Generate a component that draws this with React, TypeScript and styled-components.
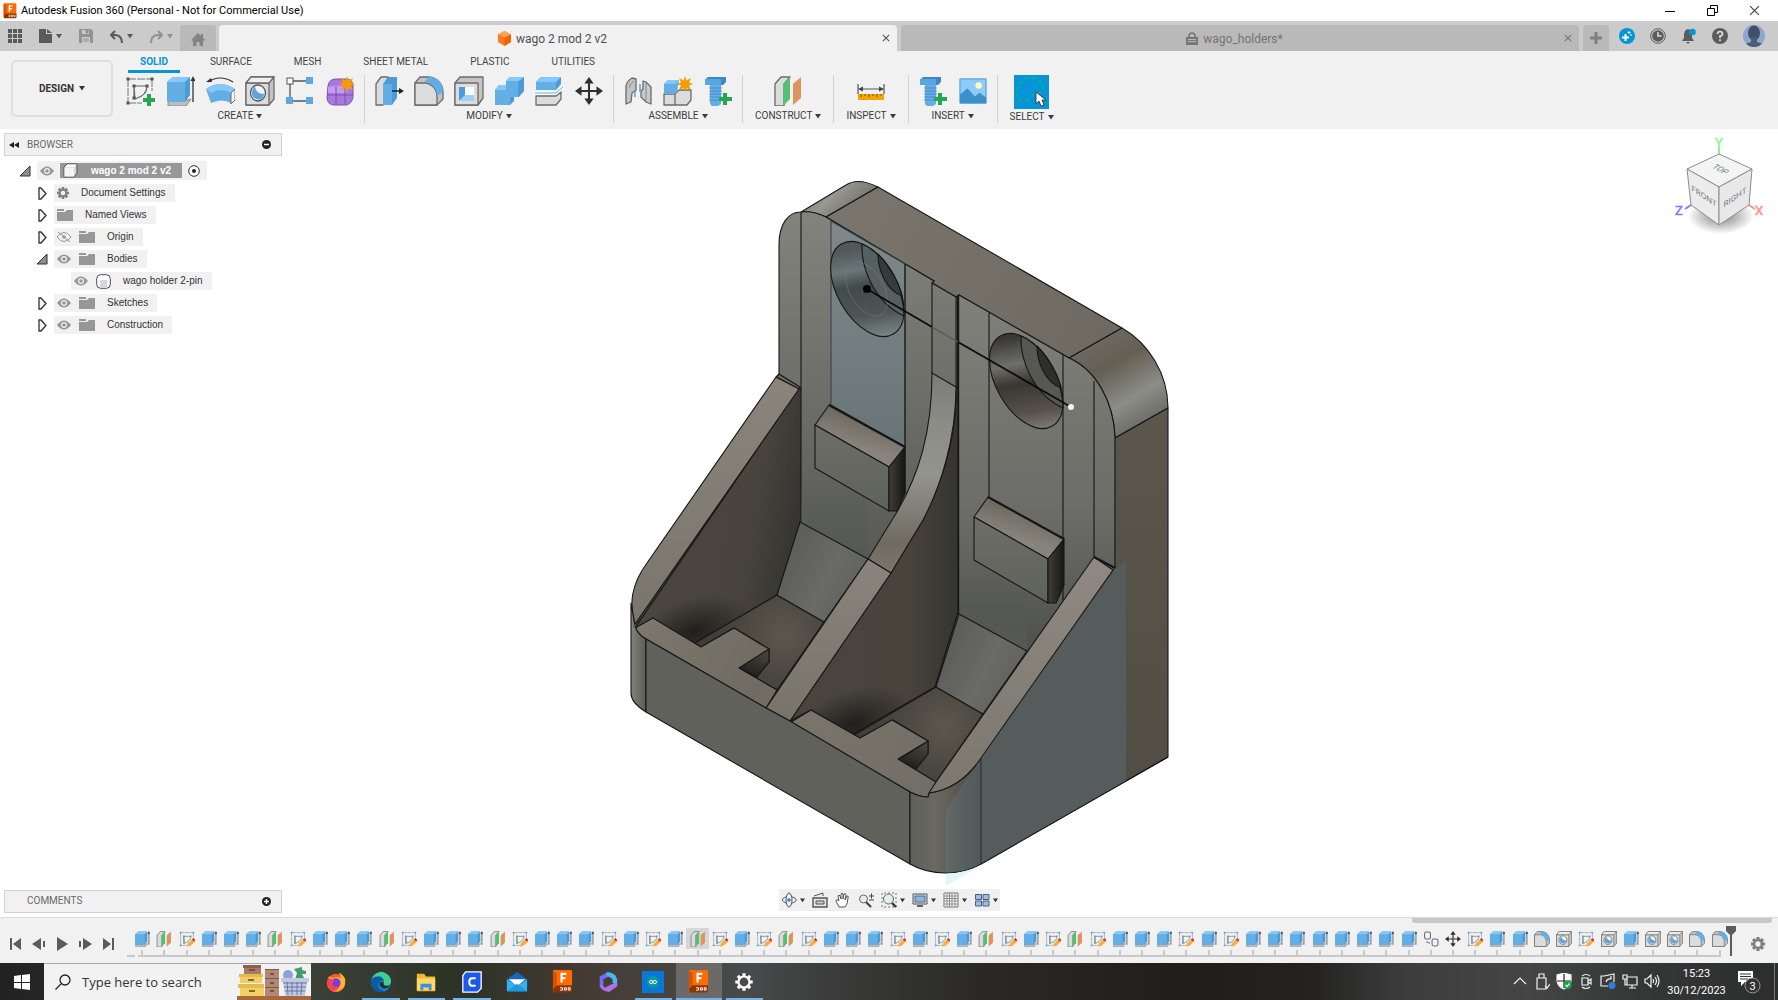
import React from "react";
import styled, { createGlobalStyle } from "styled-components";

const UI = `Roboto, "Liberation Sans", sans-serif`;
const ARIAL = `"Liberation Sans", Arial, sans-serif`;
const SEGOE = `"Open Sans", "Noto Sans", sans-serif`;

const Global = createGlobalStyle`
  * { box-sizing: border-box; }
  html, body, #root { height: 100%; }
  body { margin: 0; overflow: hidden; font-family: ${UI}; color: #3c3c3c; background: #fff; }
  button { appearance: none; border: 0; margin: 0; padding: 0; background: none; color: inherit; font: inherit; }
  svg { display: block; flex: none; }
`;

const Shell = styled.div`
  height: 100vh;
  display: flex;
  flex-direction: column;
`;

/* ---------- window title ---------- */
const TitleBar = styled.header`
  height: 21px;
  flex: none;
  display: flex;
  align-items: center;
  background: #fff;
  padding: 0 3px 0 3px;
`;
const WindowTitle = styled.h1`
  flex: 1;
  margin: 0 0 0 4px;
  font: 400 11px/16px ${UI};
  color: #000;
`;
const WindowButton = styled.button`
  width: 42px;
  height: 20px;
  display: grid;
  place-items: center;
`;

/* ---------- document tabs ---------- */
const TabBar = styled.div`
  height: 30px;
  flex: none;
  display: flex;
  align-items: stretch;
  background: #cbcbcb;
  padding-top: 4px;
`;
const QuickAccess = styled.div`
  width: 180px;
  flex: none;
  display: flex;
  align-items: center;
  gap: 17px;
  padding: 0 0 4px 8px;
`;
const QuickButton = styled.button<{ $dim?: boolean }>`
  display: flex;
  align-items: center;
  gap: 4px;
  color: ${(p) => (p.$dim ? "#929292" : "#5a5a5a")};
`;
const HomeTab = styled.button`
  width: 36px;
  margin-right: 3px;
  padding-top: 2px;
  border-radius: 3px 3px 0 0;
  background: #b9b9b9;
  color: #838383;
  display: grid;
  place-items: center;
`;
const DocTabs = styled.div`
  flex: 1;
  display: flex;
  gap: 4px;
`;
const DocTab = styled.div<{ $active?: boolean }>`
  flex: 1;
  display: flex;
  align-items: center;
  border-radius: 4px 4px 0 0;
  background: ${(p) => (p.$active ? "#f1f1f1" : "#b9b9b9")};
  color: ${(p) => (p.$active ? "#505050" : "#747474")};
`;
const DocTitle = styled.button`
  flex: 1;
  display: flex;
  align-items: center;
  justify-content: center;
  gap: 5px;
  height: 100%;
  padding: 1px 0 0 6px;
  font: 400 12px/16px ${UI};
`;
const DocClose = styled.button`
  width: 12px;
  height: 16px;
  margin-right: 5px;
  display: grid;
  place-items: center;
`;
const NewTab = styled.button`
  width: 26px;
  margin-left: 4px;
  border-radius: 4px 4px 0 0;
  background: #b9b9b9;
  color: #808080;
  display: grid;
  place-items: center;
`;
const Account = styled.div`
  display: flex;
  align-items: center;
  gap: 15px;
  padding: 0 13px 4px 10px;
  color: #5c5c5c;
`;

/* ---------- ribbon ---------- */
const Ribbon = styled.div`
  height: 78px;
  flex: none;
  display: flex;
  background: #f1f1f1;
`;
const Workspace = styled.button`
  width: 102px;
  height: 57px;
  margin: 9px 7px 0 11px;
  border: 2px solid #dedede;
  border-radius: 5px;
  display: flex;
  align-items: center;
  justify-content: center;
  gap: 5px;
  font: 700 10px/12px ${UI};
  color: #333;
`;
const RibbonBody = styled.div`
  flex: 1;
  display: flex;
  flex-direction: column;
`;
const RibbonTabs = styled.nav`
  display: flex;
  gap: 18px;
  padding: 4px 0 0 8px;
`;
const RibbonTab = styled.button<{ $on?: boolean }>`
  padding: 0 12px 2px;
  border-bottom: 3px solid ${(p) => (p.$on ? "#0696d7" : "transparent")};
  font: ${(p) => (p.$on ? 700 : 400)} 10px/13px ${UI};
  color: ${(p) => (p.$on ? "#0696d7" : "#444")};
`;
const Groups = styled.div`
  display: flex;
  margin-top: 2px;
`;
const Group = styled.section`
  display: flex;
  flex-direction: column;
  align-items: center;
  padding: 0 4px;
  height: 48px;
  border-right: 1px solid #d2d2d2;
  &:first-child { padding-left: 0; }
  &:last-child { border-right: 0; }
`;
const ToolRow = styled.div`
  display: flex;
  height: 34px;
  margin-bottom: 1px;
`;
const Tool = styled.button`
  width: 40px;
  height: 32px;
  display: grid;
  place-items: center;
`;
const SelectTool = styled.button`
  width: 35px;
  height: 34px;
  background: #0696d7;
  display: grid;
  place-items: center;
`;
const GroupLabel = styled.button`
  display: flex;
  align-items: center;
  gap: 3px;
  padding: 0 8px;
  font: 400 10px/14px ${UI};
  color: #3c3c3c;
`;

/* ---------- canvas ---------- */
const Viewport = styled.main`
  position: relative;
  flex: 1;
  min-height: 0;
  background: #fff;
  display: flex;
  flex-direction: column;
  justify-content: space-between;
  padding: 4px 4px 4px 4px;
`;
const Scene = styled.svg`
  position: absolute;
  inset: 0;
  width: 100%;
  height: 100%;
`;
const CubeSpot = styled.div`
  position: absolute;
  top: 5px;
  right: 10px;
`;
const Panel = styled.aside`
  position: relative;
  width: 278px;
`;
const PanelHead = styled.div`
  height: 23px;
  display: flex;
  align-items: center;
  padding: 0 10px 0 4px;
  border: 1px solid #d2d2d2;
  background: #f1f1f1;
`;
const PanelIcon = styled.button`
  width: 18px;
  display: flex;
`;
const PanelTitle = styled.h2`
  flex: 1;
  margin: 0;
  font: 400 10px/14px ${UI};
  color: #6a6a6a;
`;
const Tree = styled.ul`
  list-style: none;
  margin: 5px 0 0;
  padding: 0;
  display: flex;
  flex-direction: column;
  gap: 4px;
`;
const TreeRow = styled.li<{ $depth: number }>`
  height: ${(p) => (p.$depth ? 18 : 19)}px;
  display: flex;
  align-items: center;
  padding-left: ${(p) => 15 + p.$depth * 17}px;
`;
const Twisty = styled.button`
  width: 18px;
  height: 18px;
  display: flex;
  align-items: center;
`;
const Chip = styled.div<{ $root?: boolean }>`
  height: ${(p) => (p.$root ? 19 : 18)}px;
  display: flex;
  align-items: center;
  gap: ${(p) => (p.$root ? 6 : 8)}px;
  padding: 0 ${(p) => (p.$root ? 7 : 9)}px 0 3px;
  background: #f1f1f1;
  font: 400 10px/18px ${ARIAL};
  color: #333;
`;
const RootName = styled.span`
  height: 15px;
  display: flex;
  align-items: center;
  gap: 13px;
  padding: 0 11px 0 3px;
  background: #989898;
  color: #fff;
  font: 700 10px/15px ${ARIAL};
`;
const NodeName = styled.span`
  padding-left: 4px;
`;
const BottomRow = styled.div`
  position: relative;
  display: grid;
  grid-template-columns: 1fr auto 1fr;
  align-items: center;
`;
const NavBar = styled.div`
  height: 22px;
  margin-bottom: 2px;
  display: flex;
  align-items: center;
  gap: 7px;
  padding: 0 2px;
  background: #f0f0f0;
`;
const NavButton = styled.button`
  display: flex;
  align-items: center;
  gap: 3px;
`;

/* ---------- timeline ---------- */
const Timeline = styled.footer`
  position: relative;
  height: 46px;
  flex: none;
  display: flex;
  background: #f1f1f1;
  border-top: 1px solid #dadada;
`;
const ScrollThumb = styled.div`
  position: absolute;
  top: 0;
  right: 6px;
  width: 360px;
  height: 5px;
  border-radius: 0 0 3px 3px;
  background: #c8c8c8;
`;
const Playback = styled.div`
  display: flex;
  align-items: center;
  padding: 6px 8px 0 4px;
  color: #5c5c5c;
`;
const PlayButton = styled.button`
  width: 23px;
  display: grid;
  place-items: center;
`;
const Track = styled.div`
  position: relative;
  flex: 1;
  padding-top: 10px;
`;
const Features = styled.div`
  display: flex;
  padding-left: 4px;
`;
const Feature = styled.button<{ $sel?: boolean }>`
  flex: 1;
  min-width: 0;
  height: 27px;
  display: flex;
  flex-direction: column;
  align-items: center;
  gap: 1px;
  &::after { content: ""; width: 2px; height: 5px; background: #c9c9c9; }
  & > span { width: 100%; height: 21px; display: grid; place-items: center; background: ${(p) =>
    p.$sel ? "#d6d6d6" : "none"}; }
`;
const Rail = styled.div`
  display: flex;
  gap: 3px;
  margin-right: 10px;
`;
const RailDash = styled.i`
  width: 8px;
  border-top: 2px dashed #c9c9c9;
`;
const RailLine = styled.i`
  flex: 1;
  height: 2px;
  background: #c9c9c9;
`;
const Marker = styled.div`
  position: absolute;
  right: -5px;
  top: 8px;
`;
const TimelineSettings = styled.button`
  width: 47px;
  padding: 6px 0 0 7px;
  display: grid;
  place-items: center;
`;

/* ---------- taskbar ---------- */
const Taskbar = styled.div`
  height: 37px;
  flex: none;
  display: flex;
  align-items: stretch;
  color: #fff;
  background: linear-gradient(90deg, #222 0, #3c4138 17.5%, #2d3226 26%, #453b34 33%, #484b4c 42%, #3a3b3a 47%, #2a2926 55%, #1f1e1d 67%, #242322 74%, #3d3d3d 79%, #454545 86%, #363838 92%, #2c2d2d 100%);
`;
const Start = styled.button`
  width: 44px;
  display: grid;
  place-items: center;
`;
const Search = styled.label`
  width: 267px;
  display: flex;
  align-items: center;
  border-top: 1px solid #a8a8a8;
  background: #f2f2f2;
  padding-left: 11px;
  gap: 11px;
`;
const SearchInput = styled.input`
  flex: 1;
  min-width: 0;
  border: 0;
  padding: 0;
  background: none;
  font: 400 13px/20px ${SEGOE};
  color: #333;
  outline: 0;
  &::placeholder { color: #333; opacity: 1; }
`;
const Apps = styled.div`
  width: 454px;
  margin-left: 2px;
  display: grid;
  grid-template-columns: repeat(10, 1fr);
`;
const AppButton = styled.button<{ $run?: boolean; $active?: boolean }>`
  position: relative;
  display: grid;
  place-items: center;
  background: ${(p) => (p.$active ? "#6b6a69" : "none")};
  &::after {
    content: "";
    position: absolute;
    bottom: 0;
    left: ${(p) => (p.$active ? 0 : 4)}px;
    right: ${(p) => (p.$active ? 0 : 4)}px;
    height: 2px;
    background: ${(p) => (p.$run || p.$active ? "#76b2e4" : "none")};
  }
`;
const Tray = styled.div`
  margin-left: auto;
  display: flex;
  align-items: center;
`;
const TrayButton = styled.button`
  width: 22px;
  display: grid;
  place-items: center;
`;
const Clock = styled.time`
  width: 67px;
  text-align: center;
  font: 400 11px/17px ${UI};
`;
const Notices = styled.button`
  width: 37px;
  display: grid;
  place-items: center;
`;
const DesktopEdge = styled.i`
  width: 4px;
  margin-left: 7px;
  align-self: stretch;
  border-left: 1px solid #777;
`;

/* ================= icons ================= */
const Caret = ({ s = 6, c = "currentColor" }: { s?: number; c?: string }) => (
  <svg width={s} height="5" viewBox="0 0 6 5"><path d="M0 0h6L3 4.6z" fill={c} /></svg>
);

const FusionLogo = ({ w, h }: { w: number; h: number }) => (
  <svg width={w} height={h} viewBox="0 0 22 24">
    <rect x="1" width="20" height="23" rx="1.5" fill="#ff6b00" />
    <path d="M1 1l4 2v14l-4 3z" fill="#d95200" />
    <path d="M1 20l4-4h16v6l-1 1.500H2z" fill="#8a3500" />
    <path d="M10 13V4h5M10 8.500h4" stroke="#fff" strokeWidth="2.200" fill="none" />
    <path d="M8.500 18.500h2.500v2.500H8.500M13 18.500h2v2.500h-2zM17 18.500h2v2.500h-2z" stroke="#fff" fill="none" strokeWidth="1" />
  </svg>
);

const Grey = ({ children }: { children: React.ReactNode }) => (
  <g fill="#dcdcdc" stroke="#6b6b6b" strokeWidth="1.300" strokeLinejoin="round">{children}</g>
);
type IconProps = { w?: number; h?: number };
const Svg = ({ w = 30, h = 30, children }: IconProps & { children: React.ReactNode }) => (
  <svg width={w} height={h} viewBox="0 0 30 30">{children}</svg>
);

const SketchLines = ({ dot }: { dot: string }) => (
  <>
    <path d="M3 3h24M3 3v24M27 3v12M3 27h14" stroke="#777" strokeWidth="1" strokeDasharray="8 1" fill="none" />
    <path d="M9 10h13c0 7-5 11-12 13zM9 10v13" stroke="#666" strokeWidth="1.200" fill="none" />
    {[[3, 3], [27, 3], [3, 27], [9, 10], [22, 10], [9, 22]].map(([x, y]) => (
      <rect key={`${x}-${y}`} x={x - 1.5} y={y - 1.5} width="3" height="3" fill={dot} />
    ))}
  </>
);
const Sketch = (p: IconProps) => (
  <Svg {...p}><SketchLines dot="#555" /><path d="M22 18h4v4h4v4h-4v4h-4v-4h-4v-4h4z" fill="#26a651" /></Svg>
);
const SketchEdit = (p: IconProps) => (
  <Svg {...p}>
    <SketchLines dot="#4fa8e6" />
    <path d="M15 29l2-6 8-8 5 5-9 8z" fill="#f3b13a" /><path d="M24 16l3-3 4 4-3 3z" fill="#e8323c" />
  </Svg>
);
const Extrude = (p: IconProps) => (
  <Svg {...p}>
    <path d="M3 27l2-3h18l3-1-5 7H3z" fill="#bdbdbd" stroke="#8b8b8b" />
    <path d="M2 6l6-5h17v18l-5 7H2z" fill="#4c9bd9" />
    <path d="M2 6h18v20H2z" fill="#64aee6" /><path d="M2 6l6-5h17l-5 5z" fill="#86c8fb" />
    <path d="M28 26V4" stroke="#333" strokeWidth="1.300" /><path d="M25.500 5L28 0l2.500 5z" fill="#333" />
  </Svg>
);
const Revolve = () => (
  <Svg>
    <path d="M1 13q14-10 29 0l-4 14q-9-5-20 0z" fill="#64aee6" />
    <path d="M1 13q14-10 29 0l-4 4q-10-6-20 0z" fill="#86c8fb" />
    <path d="M30 13l-4 4v11l4-4z" fill="#fff" stroke="#666" />
    <path d="M3 6q12-8 25 0" fill="none" stroke="#333" strokeWidth="1.200" /><path d="M1 6l5-4 1 4z" fill="#333" />
  </Svg>
);
const Hole = (p: IconProps) => (
  <Svg {...p}>
    <Grey><path d="M1 7l5-6h23v22l-5 6H1z" fill="#c4c4c4" /><path d="M1 7h23v22H1z" /><path d="M1 7l5-6h23l-5 6z" fill="#eee" /></Grey>
    <ellipse cx="13" cy="17" rx="7.500" ry="8" fill="#f4f4f4" stroke="#555" strokeWidth="1.300" />
    <path d="M10 10.500c-5 5-4 12 3 13 4 0 6-2 6-6-5 1-8-2-9-7z" fill="#5ba6e0" />
  </Svg>
);
const Pattern = () => (
  <Svg>
    <path d="M6 5h18M5 6v18M6 25h18" stroke="#555" strokeWidth="1.300" />
    <rect x="2" y="2" width="6" height="6" fill="#fff" stroke="#555" />
    <path d="M21 1h7v7h-7zM1 21h7v7H1zM21 21h7v7h-7z" fill="#5aa9e6" />
  </Svg>
);
const Star = ({ x, y }: { x: number; y: number }) => (
  <path transform={`translate(${x} ${y})`} d="M0-8l1.500 4.500L6-6 4-1.500 8 0 4 1.500 6 6 1.500 4 0 8l-1.500-4L-6 6l2-4.500L-8 0l4-1.500L-6-6l4.500 2.500z" fill="#f59b00" />
);
const Form = () => (
  <Svg>
    <path d="M3 10q1-7 8-7h11q6 1 6 7v10q0 6-6 9H9q-6 0-7-7z" fill="#a879dd" stroke="#7e4fb8" />
    <path d="M3 11q8-3 22 0l-4 6H3z" fill="#c39bf0" /><path d="M11 10v19M20 11v17M3 19h25" stroke="#7e4fb8" fill="none" />
    <Star x={22} y={8} />
  </Svg>
);
const PressPull = () => (
  <Svg>
    <Grey><path d="M2 8l5-7h7v22l-5 6H2z" /></Grey>
    <path d="M9 8l5-7h9v21l-5 7H9z" fill="#4c9bd9" /><path d="M9 8h9v21H9z" fill="#64aee6" />
    <path d="M18 15h9" stroke="#222" strokeWidth="1.500" /><path d="M25 12l5 3-5 3z" fill="#222" />
  </Svg>
);
const Fillet = (p: IconProps) => (
  <Svg {...p}>
    <Grey><path d="M1 7l5-6h9c9 1 14 8 14 15v7l-6 6H1z" fill="#c2c2c2" /><path d="M1 7h9c8 0 13 6 13 14v8H1z" /></Grey>
    <path d="M10 6l5-5c9 0 14 7 14 15l-6 4C23 12 18 7 10 6z" fill="#64aee6" />
  </Svg>
);
const ShellIcon = () => (
  <Svg>
    <Grey><path d="M1 7l5-6h23v21l-5 7H1z" fill="#c4c4c4" /><path d="M1 7h23v22H1z" /></Grey>
    <path d="M5 11h15v14H5z" fill="#fff" /><path d="M5 11h6v9l-6 5z" fill="#4c9bd9" /><path d="M5 25l6-6h9v6z" fill="#9ad1fa" />
  </Svg>
);
const Combine = () => (
  <Svg>
    <path d="M1 14l4-5h7V5l4-4h14v14l-5 6h-5v4l-4 4H1z" fill="#4c9bd9" />
    <path d="M1 14h11V5h12v16H16v8H1z" fill="#64aee6" /><path d="M12 5l4-4h14l-5 4zM1 14l4-5h7v5z" fill="#86c8fb" />
  </Svg>
);
const Offset = () => (
  <Svg>
    <path d="M2 6l5-5h20v7l-5 6H2z" fill="#4c9bd9" /><path d="M2 6h20v8H2z" fill="#64aee6" /><path d="M2 6l5-5h20l-5 5z" fill="#86c8fb" />
    <Grey><path d="M2 20h20l5-4v7l-5 6H2z" /></Grey>
    <path d="M0 17h22l7-6" stroke="#fff" strokeWidth="3" fill="none" /><path d="M1 17h21l7-6" stroke="#64aee6" fill="none" />
  </Svg>
);
const Move = (p: IconProps) => (
  <Svg {...p}>
    <path d="M15 4v22M4 15h22" stroke="#2f2f2f" strokeWidth="2.200" />
    <path d="M15 0l5 7H10zM15 30l5-7H10zM0 15l7-5v10zM30 15l-7-5v10z" fill="#2f2f2f" />
  </Svg>
);
const Joint = () => (
  <Svg>
    <Grey><path d="M3 10q1-5 6-8l4 1v11l-4 3-1 9-5 2z" fill="#c4c4c4" /><path d="M20 13V5l3 1 5 5v17l-5-2-5-5v-6z" fill="#c9c9c9" /></Grey>
    <path d="M6 12q1-5 5-7M23 7v18" stroke="#8a8a8a" fill="none" />
    <path d="M12 15v6M17 8v8" stroke="#5aa9e6" strokeWidth="1.600" />
  </Svg>
);
const NewComponent = () => (
  <Svg>
    <Grey><path d="M1 18h11v11H1zM12 18l4-4h12v10l-4 5H12z" /></Grey>
    <path d="M1 8l4-4h11l-2 12-2 2H1z" fill="#64aee6" /><path d="M1 8l4-4h11l-4 4z" fill="#86c8fb" />
    <Star x={22} y={8} />
  </Svg>
);
const Bolt = () => (
  <Svg>
    <path d="M2 4l3-3h18v5l-3 3H2z" fill="#3f86c4" /><path d="M2 3h16v6H2z" fill="#5aa6e2" />
    <path d="M7 9h11v19l-3 2H9l-2-2z" fill="#64aee6" />
    <path d="M6 12h13M6 15h13M6 18h13M6 21h13M6 24h13" stroke="#3f86c4" strokeWidth=".8" />
    <path d="M20 17h4v4h5v4h-5v4h-4v-4h-4v-4h4z" fill="#26a651" />
  </Svg>
);
const Plane = (p: IconProps) => (
  <Svg {...p}>
    <Grey><path d="M2 8l6-7h9l-6 7v22H2z" /></Grey>
    <path d="M10 8l7-7v22l-7 7z" fill="#54bf75" /><path d="M20 8l8-7v21l-8 7z" fill="#e0935f" />
  </Svg>
);
const Measure = () => (
  <Svg>
    <path d="M2 8v10M28 8v10M3 13h24" stroke="#555" strokeWidth="1.200" /><path d="M2 13l5-2.500v5zM28 13l-5-2.500v5z" fill="#444" />
    <path d="M2 18h26v6H2z" fill="#f5a300" /><path d="M5 18v3M9 18v2M13 18v3M17 18v2M21 18v3M25 18v2" stroke="#7a4f00" />
  </Svg>
);
const Picture = () => (
  <Svg w={28} h={28}>
    <path d="M1 2h28v26H1z" fill="#8ccbfa" stroke="#3f94d0" /><path d="M1 19l8-7 8 9 5-4 7 5v6H1z" fill="#3a90c9" />
    <circle cx="21" cy="9" r="3.500" fill="#fdf8c4" />
  </Svg>
);
const JointSmall = (p: IconProps) => (
  <Svg {...p}>
    <Grey><rect x="3" y="2" width="11" height="13" rx="3" fill="#f4f4f4" strokeWidth="2" /><rect x="17" y="15" width="11" height="13" rx="3" fill="#f4f4f4" strokeWidth="2" /></Grey>
    <path d="M6 20l7 3" stroke="#4f7fd6" strokeWidth="2" />
  </Svg>
);
const Lasso = () => (
  <svg width="35" height="34" viewBox="0 0 35 34">
    <path d="M4 22c-3-6 1-18 10-19 9-1 15 4 15 9s-6 7-10 8-5 6-9 6-5-2-6-4z" fill="none" stroke="#1fb27c" strokeWidth="1.200" strokeDasharray="4 3" />
    <path d="M22 17v12l3-3 2 5 3-1-2-5h4z" fill="#fff" stroke="#333" strokeWidth=".9" />
  </svg>
);

const GearShape = ({ s, c, hole = "#f1f1f1" }: { s: number; c: string; hole?: string }) => (
  <svg width={s} height={s} viewBox="-10 -10 20 20">
    {[0, 45, 90, 135].map((a) => <rect key={a} x="-2.200" y="-10" width="4.400" height="20" fill={c} transform={`rotate(${a})`} />)}
    <circle r="7.300" fill={c} /><circle r="3.800" fill={hole} />
  </svg>
);
const Eye = ({ off }: { off?: boolean }) => (
  <svg width="14" height="10" viewBox="0 0 14 10">
    <path d="M0 5q7-9 14 0-7 9-14 0z" fill={off ? "#f1f1f1" : "#979797"} stroke="#979797" strokeWidth={off ? 1 : 0} />
    <circle cx="7" cy="5" r="3" fill="#f1f1f1" /><circle cx="7" cy="5" r="1.800" fill="#979797" />
    {off && <path d="M1 0l12 10" stroke="#979797" />}
  </svg>
);
const Folder = () => (
  <svg width="16" height="12" viewBox="0 0 16 12"><path d="M0 0h7v2H0zM0 3h8l2-2h6v11H0z" fill="#979797" /></svg>
);
const Closed = () => (
  <svg width="11" height="13" viewBox="-2 0 11 13"><path d="M1 1v11h2l5-5.500L3 1z" fill="#f4f4f4" stroke="#333" strokeWidth="1.300" /></svg>
);
const Opened = () => (
  <svg width="12" height="12" viewBox="0 0 12 12"><path d="M11 1v10H1z" fill="#8e8e8e" stroke="#333" /></svg>
);
const Cube = () => (
  <svg width="15" height="15" viewBox="0 0 15 15"><path d="M1 4l3-3h10v9l-3 4H1z" fill="#d6d6d6" stroke="#555" /><path d="M1.500 4.500H11v9H1.500z" fill="#f5f5f5" /><path d="M2 4l2.500-2.500h9L11 4z" fill="#fff" /></svg>
);
const BodyIcon = () => (
  <svg width="15" height="15" viewBox="0 0 15 15"><rect x=".7" y=".7" width="13.600" height="13.600" rx="4" fill="#fff" stroke="#4b4b60" /><path d="M4 6h7v8H4z" fill="#d3d8e0" /></svg>
);
const OrangeCube = () => (
  <svg width="13" height="15" viewBox="0 0 13 15"><path d="M0 3.500L6.500 0 13 3.500v7.500L6.500 15 0 11z" fill="#ff7a1a" /><path d="M0 3.500L6.500 6.500 13 3.500 6.500 0z" fill="#ffa25c" /><path d="M6.500 6.500L13 3.500v7.500L6.500 15z" fill="#ec6500" /></svg>
);
const Cross = ({ s = 8, w = 1.3 }: { s?: number; w?: number }) => (
  <svg width={s} height={s} viewBox="0 0 10 10"><path d="M1 1l8 8M9 1L1 9" stroke="currentColor" strokeWidth={w} /></svg>
);

/* ================= model ================= */
const POCKET_ART = {
  blue: { bowl: "holeBlue", ring: "#566063", bore: "#363c3c" },
  brown: { bowl: "holeBrown", ring: "#585853", bore: "#2f2e2a" },
};
const Pocket = ({ tone }: { tone: keyof typeof POCKET_ART }) => {
  const art = POCKET_ART[tone];
  return (
    <g>
      <path d="M801 440H868V559L801 522z" fill="url(#lowwall)" stroke="none" />
      <path d="M777 595L824 622 777 690 739 668 769 662 769 649 734 628 701 647 695 643z" fill="url(#floor)" />
      <path d="M769 649V662L757 677 739 668z" fill="url(#notch)" />
      <path d="M800 522L868 559 824 622 777 595z" fill="url(#slope)" />
      <g transform="matrix(36.700 21.200 0 42.500 867.300 289)">
        <circle r="1" fill={`url(#${art.bowl})`} vectorEffect="non-scaling-stroke" />
      </g>
      <path d="M862 244C861 268 874 302 904 316 904 290 886 254 862 244z" fill={art.ring} />
      <path d="M878 254C878 270 886 290 902 296 898 280 888 264 878 254z" fill={art.bore} />
      <path d="M829 405L905 447 889 467 815 425z" fill="url(#bevel)" />
      <path d="M829 405L905 447" strokeWidth="2.200" />
      <path d="M815 425L889 467V511L815 468z" fill="url(#blockface)" />
      <path d="M905 447V493L897 511H889V467z" fill="url(#blockside)" />
    </g>
  );
};

const Model = () => (
  <Scene viewBox="0 129 1778 788" preserveAspectRatio="xMidYMid meet" role="img" aria-label="wago holder 2-pin">
    <defs>
      <linearGradient id="plate" x1="0" y1="212" x2="0" y2="640" gradientUnits="userSpaceOnUse"><stop offset="0" stopColor="#82837b" /><stop offset=".45" stopColor="#6c6d68" /><stop offset="1" stopColor="#4e504c" /></linearGradient>
      <linearGradient id="plate2" x1="0" y1="300" x2="0" y2="660" gradientUnits="userSpaceOnUse"><stop offset="0" stopColor="#7f8079" /><stop offset=".6" stopColor="#6b6c67" /><stop offset="1" stopColor="#4c4e4a" /></linearGradient>
      <linearGradient id="lowwall" x1="0" y1="480" x2="0" y2="559" gradientUnits="userSpaceOnUse"><stop offset="0" stopColor="#565854" stopOpacity="0" /><stop offset="1" stopColor="#575956" /></linearGradient>
      <linearGradient id="top" x1="850" y1="200" x2="1100" y2="350" gradientUnits="userSpaceOnUse"><stop offset="0" stopColor="#7a756c" /><stop offset="1" stopColor="#6e6961" /></linearGradient>
      <linearGradient id="lcyl" x1="822" y1="186" x2="850" y2="216" gradientUnits="userSpaceOnUse"><stop offset="0" stopColor="#85857d" /><stop offset=".35" stopColor="#979890" /><stop offset="1" stopColor="#77736a" /></linearGradient>
      <linearGradient id="rcyl" x1="1100" y1="330" x2="1152" y2="420" gradientUnits="userSpaceOnUse"><stop offset="0" stopColor="#716c63" /><stop offset=".35" stopColor="#645f53" /><stop offset=".72" stopColor="#8b8d86" /><stop offset="1" stopColor="#6d6c66" /></linearGradient>
      <linearGradient id="side" x1="0" y1="420" x2="0" y2="780" gradientUnits="userSpaceOnUse"><stop offset="0" stopColor="#5a564c" /><stop offset="1" stopColor="#534e45" /></linearGradient>
      <linearGradient id="blue" x1="0" y1="225" x2="0" y2="446" gradientUnits="userSpaceOnUse"><stop offset="0" stopColor="#7f898b" /><stop offset="1" stopColor="#687476" /></linearGradient>
      <linearGradient id="arm" x1="0" y1="380" x2="0" y2="640" gradientUnits="userSpaceOnUse"><stop offset="0" stopColor="#8a847b" /><stop offset="1" stopColor="#79756b" /></linearGradient>
      <linearGradient id="arm2" x1="0" y1="560" x2="0" y2="800" gradientUnits="userSpaceOnUse"><stop offset="0" stopColor="#8f8981" /><stop offset="1" stopColor="#7b776d" /></linearGradient>
      <linearGradient id="armmid" x1="0" y1="560" x2="0" y2="720" gradientUnits="userSpaceOnUse"><stop offset="0" stopColor="#8a847c" /><stop offset="1" stopColor="#787469" /></linearGradient>
      <linearGradient id="mid" x1="0" y1="375" x2="0" y2="572" gradientUnits="userSpaceOnUse"><stop offset="0" stopColor="#7b7c75" /><stop offset=".25" stopColor="#8b8c86" /><stop offset=".5" stopColor="#94948e" /><stop offset=".85" stopColor="#6f6b60" /><stop offset="1" stopColor="#7b766c" /></linearGradient>
      <linearGradient id="wall" x1="680" y1="500" x2="800" y2="520" gradientUnits="userSpaceOnUse"><stop offset="0" stopColor="#4a463f" /><stop offset=".6" stopColor="#48443d" /><stop offset="1" stopColor="#353430" /></linearGradient>
      <linearGradient id="wall2" x1="830" y1="600" x2="958" y2="600" gradientUnits="userSpaceOnUse"><stop offset="0" stopColor="#49453e" /><stop offset=".6" stopColor="#48443c" /><stop offset="1" stopColor="#353430" /></linearGradient>
      <radialGradient id="shade" cx=".5" cy=".5" r=".5"><stop offset="0" stopColor="#1b1a17" stopOpacity=".9" /><stop offset=".4" stopColor="#1d1c19" stopOpacity=".55" /><stop offset="1" stopColor="#1d1b18" stopOpacity="0" /></radialGradient>
      <radialGradient id="floor" cx="785" cy="635" r="70" gradientUnits="userSpaceOnUse"><stop offset="0" stopColor="#5c574e" /><stop offset="1" stopColor="#403e38" /></radialGradient>
      <linearGradient id="notch" x1="765" y1="650" x2="755" y2="676" gradientUnits="userSpaceOnUse"><stop offset="0" stopColor="#4a4740" /><stop offset="1" stopColor="#23211e" /></linearGradient>
      <linearGradient id="slope" x1="790" y1="560" x2="850" y2="590" gradientUnits="userSpaceOnUse"><stop offset="0" stopColor="#5e5f5c" /><stop offset=".6" stopColor="#6a6a67" /><stop offset="1" stopColor="#636360" /></linearGradient>
      <linearGradient id="bevel" x1="850" y1="415" x2="842" y2="442" gradientUnits="userSpaceOnUse"><stop offset="0" stopColor="#6e6961" /><stop offset="1" stopColor="#89847b" /></linearGradient>
      <linearGradient id="blockface" x1="0" y1="425" x2="0" y2="511" gradientUnits="userSpaceOnUse"><stop offset="0" stopColor="#6d6e68" /><stop offset="1" stopColor="#5f615b" /></linearGradient>
      <linearGradient id="blockside" x1="889" y1="0" x2="905" y2="0" gradientUnits="userSpaceOnUse"><stop offset="0" stopColor="#413d38" /><stop offset="1" stopColor="#171614" /></linearGradient>
      <linearGradient id="holeBlue" x1=".1" y1="0" x2=".75" y2="1"><stop offset="0" stopColor="#4a5253" /><stop offset=".2" stopColor="#525b5c" /><stop offset=".36" stopColor="#6b7677" /><stop offset=".5" stopColor="#424a4b" /><stop offset=".75" stopColor="#4d5655" /><stop offset="1" stopColor="#849090" /></linearGradient>
      <linearGradient id="holeBrown" x1=".1" y1="0" x2=".75" y2="1"><stop offset="0" stopColor="#4a4843" /><stop offset=".15" stopColor="#3a3834" /><stop offset=".38" stopColor="#6f6f69" /><stop offset=".55" stopColor="#3a3631" /><stop offset=".8" stopColor="#57524b" /><stop offset="1" stopColor="#8a8881" /></linearGradient>
      <linearGradient id="fcyl" x1="910" y1="0" x2="981" y2="0" gradientUnits="userSpaceOnUse"><stop offset="0" stopColor="#5f5f59" /><stop offset=".35" stopColor="#696862" /><stop offset=".7" stopColor="#5a564e" /><stop offset="1" stopColor="#4f4b44" /></linearGradient>
      <linearGradient id="lfcyl" x1="631" y1="0" x2="646" y2="0" gradientUnits="userSpaceOnUse"><stop offset="0" stopColor="#83837b" /><stop offset="1" stopColor="#5c5c55" /></linearGradient>
      <linearGradient id="rim" x1="640" y1="630" x2="930" y2="790" gradientUnits="userSpaceOnUse"><stop offset="0" stopColor="#7c766d" /><stop offset=".4" stopColor="#706b60" /><stop offset=".55" stopColor="#7a746b" /><stop offset="1" stopColor="#736e65" /></linearGradient>
      <clipPath id="wallClip"><path d="M799 388H801V522L777 595 695 643 635 628z" /></clipPath>
      <clipPath id="wall2Clip"><path d="M958 500V612L935 687 853 735 790 721z" /></clipPath>
    </defs>

    <g stroke="#161616" strokeWidth="1.100" strokeLinejoin="round">
      {/* body fill under all faces */}
      <path d="M779 374V245L801 212 878 217 934 282 1069 350 1115 568 981 760 910 800 646 645 635 624 776 390z" fill="#3f3c37" stroke="none" />
      <path d="M830 212L934 276 965 290 1069 352 1060 372 925 300z" fill="#7a7a73" stroke="none" />

      {/* back plate */}
      <path d="M801 212L846 185Q858 177 878 187L826 217Q812 211 801 212z" fill="url(#lcyl)" />
      <path d="M826 217L878 187 1122 328 1069 358 959 295 956 297 932 283 934 281z" fill="url(#top)" />
      <path d="M1069 358L1122 328C1148 343 1168 373 1168 408L1115 438C1114 402 1096 370 1069 358z" fill="url(#rcyl)" />
      <path d="M1115 438L1168 408V757L981 864V750z" fill="url(#side)" />
      <path d="M779 374V245C779 224 788 212 801 212 810 211 818 213 826 217L934 281 932 283 956 297 959 295 1069 358C1096 370 1114 402 1115 438V568L980 760 780 600z" fill="url(#plate)" />
      <path d="M959 296L1069 359C1095 371 1113 402 1114 438V568L1026 650 959 612z" fill="url(#plate2)" stroke="none" />
      <path d="M831 221L905 264V447L831 405z" fill="url(#blue)" stroke="#33454a" />
      <path d="M801 212V390M905 264V494M932 283V374M989 313V498M1063 355V600M1094 381V557M956 296V388" fill="none" />
      <path d="M958 296V614" fill="none" strokeWidth="2.400" />

      {/* left wall and pockets */}
      <path d="M799 388H801V522L777 595 695 643 635 628z" fill="url(#wall)" />
      <g clipPath="url(#wallClip)"><ellipse cx="694" cy="632" rx="62" ry="34" fill="url(#shade)" stroke="none" transform="rotate(-18 694 632)" /></g>
      <Pocket tone="blue" />
      <g transform="matrix(36.700 21.200 0 42.500 866.500 289)"><circle r=".57" fill="none" stroke="#5f8a92" strokeOpacity=".55" strokeWidth=".02" /></g>
      <g transform="translate(159 92)"><Pocket tone="brown" /></g>

      {/* middle divider */}
      <path d="M956 387Q958 450 923 520L891 573 790 721 811 710 853 734 935 687 958 612V388z" fill="url(#wall2)" />
      <g clipPath="url(#wall2Clip)"><ellipse cx="853" cy="724" rx="62" ry="34" fill="url(#shade)" stroke="none" transform="rotate(-18 853 724)" /></g>
      <path d="M932 373L956 387C956 440 940 488 923 520L891 573 868 559 892 520C920 476 932 430 932 373z" fill="url(#mid)" />
      <path d="M868 559L891 573 790 721 766 708z" fill="url(#armmid)" />

      {/* left arm */}
      <path d="M779 374L800 387 799 389 776 377z" fill="#6a665e" />
      <path d="M776 377L799 389 635 624C629 604 631 585 647 563z" fill="url(#arm)" />

      {/* front rim */}
      <path d="M635 628L653 618 701 647 734 628 769 649 739 668 777 690 766 708 646 639Q637 634 635 628z" fill="url(#rim)" />
      <path d="M791 722L811 710 860 738 892 720 928 741 898 759 936 782 928 797Q920 797 910 792z" fill="url(#rim)" />

      {/* front and corners */}
      <path d="M631 603L635 626Q638 635 646 639V712C636 706 631 700 631 693z" fill="url(#lfcyl)" />
      <path d="M646 639L766 708 790 721 910 792V864L646 712z" fill="#61615b" />
      <path d="M981 758L1113 570 1115 568 1126 562V781L981 864z" fill="#544f47" stroke="none" />
      <path d="M910 792Q920 797 928 797L929 793Q962 788 981 758V864C962 876 930 876 910 864z" fill="url(#fcyl)" />
      <path d="M1094 557L1113 570 981 758Q960 789 929 793L936 782z" fill="url(#arm2)" />
      <path d="M1094 557L1115 568" strokeWidth="2.200" />
      <path d="M981 864L1168 757" fill="none" />
    </g>

    {/* construction plane */}
    <path d="M1115 569L1126 562V781L981 864 Q964 873 946 873V809L975 767 981 758z" fill="#5a8fa3" fillOpacity=".22" />
    <path d="M946 874Q965 873 981 865L987 862 946 886z" fill="#e3f5fc" />

    <path d="M867 289L932 327M958 342L1071 407" stroke="#0c0c0c" strokeWidth="1.800" />
    <path d="M932 327L958 342" stroke="#555" strokeWidth="1.200" />
    <circle cx="867" cy="289" r="4" fill="#000" />
    <circle cx="1071" cy="407" r="3" fill="#f3f3f3" />
  </Scene>
);

const ViewCube = () => (
  <svg width="96" height="104" viewBox="1672 135 96 104" fontFamily="Roboto, sans-serif">
    <defs><radialGradient id="cs"><stop offset="0" stopColor="#000" stopOpacity=".5" /><stop offset="1" stopColor="#000" stopOpacity="0" /></radialGradient></defs>
    <ellipse cx="1721" cy="217" rx="33" ry="18" fill="url(#cs)" />
    <path d="M1719 148v8" stroke="#8df58d" strokeWidth="2" />
    <path d="M1691 206l-6 4" stroke="#7d7dff" strokeWidth="2" /><path d="M1749 206l6 4" stroke="#ff8f8f" strokeWidth="2" />
    <g stroke="#8c8c8c">
      <path d="M1687 170L1719 155 1752 170 1719 188z" fill="#f4f4f4" />
      <path d="M1687 170L1719 188V226L1691 206z" fill="#ececec" />
      <path d="M1752 170L1719 188V226L1749 206z" fill="#e8e8e8" />
    </g>
    <g fontSize="8" fill="#777f88" textAnchor="middle">
      <text transform="translate(1704 200) skewY(34)">FRONT</text>
      <text transform="translate(1735 201) skewY(-34)">RIGHT</text>
      <text transform="translate(1718 172) rotate(28) skewX(-28)">TOP</text>
    </g>
    <g fontSize="13" textAnchor="middle" strokeWidth=".5">
      <text x="1719" y="148" fill="#8df58d" stroke="#8df58d">Y</text><text x="1679" y="216" fill="#7d7dff" stroke="#7d7dff">Z</text><text x="1759" y="216" fill="#ff8f8f" stroke="#ff8f8f">X</text>
    </g>
  </svg>
);

/* ================= data ================= */
const groups: { label: string; tools: [string, () => React.ReactElement][] }[] = [
  { label: "CREATE", tools: [["Create Sketch", () => <Sketch />], ["Extrude", () => <Extrude />], ["Revolve", Revolve], ["Hole", () => <Hole />], ["Pattern", Pattern], ["Create Form", Form]] },
  { label: "MODIFY", tools: [["Press Pull", PressPull], ["Fillet", () => <Fillet />], ["Shell", ShellIcon], ["Combine", Combine], ["Offset Face", Offset], ["Move", () => <Move w={28} h={28} />]] },
  { label: "ASSEMBLE", tools: [["Joint", Joint], ["New Component", NewComponent], ["Fastener", Bolt]] },
  { label: "CONSTRUCT", tools: [["Offset Plane", () => <Plane />]] },
  { label: "INSPECT", tools: [["Measure", Measure]] },
  { label: "INSERT", tools: [["Insert Fastener", Bolt], ["Canvas", Picture]] },
];
const features = "EPSEEEPSEEEPSEEEPSEEESESEPSESPSEEESESEPSESPSEEESESEEEEEEEEJMSEEFHSHEHHFF".split("");
const featureIcons: Record<string, [string, React.FC<IconProps>]> = {
  E: ["Extrude", Extrude], P: ["Plane", Plane], S: ["Sketch", SketchEdit], J: ["Joint", JointSmall],
  M: ["Move", Move], F: ["Fillet", Fillet], H: ["Hole", Hole],
};
const nodes: { name: string; depth: number; open?: boolean; leaf?: boolean; icons: React.ReactNode }[] = [
  { name: "Document Settings", depth: 1, icons: <GearShape s={12} c="#808080" /> },
  { name: "Named Views", depth: 1, icons: <Folder /> },
  { name: "Origin", depth: 1, icons: <><Eye off /><Folder /></> },
  { name: "Bodies", depth: 1, open: true, icons: <><Eye /><Folder /></> },
  { name: "wago holder 2-pin", depth: 2, leaf: true, icons: <><Eye /><BodyIcon /></> },
  { name: "Sketches", depth: 1, icons: <><Eye /><Folder /></> },
  { name: "Construction", depth: 1, icons: <><Eye /><Folder /></> },
];

const navIcons: [string, boolean, React.ReactNode][] = [
  ["Orbit", true, <><ellipse cx="8" cy="8" rx="3" ry="7" fill="none" stroke="#555" /><path d="M5 5C0 6 0 10 6 11M11 5c6 1 5 5 0 6" fill="none" stroke="#555" /><path d="M8 6v4M6 8h4" stroke="#1d86e0" strokeWidth="1.300" /></>],
  ["Look At", false, <><path d="M1 6h14v9H1z" fill="#e4e4e4" stroke="#555" strokeWidth="1.400" /><path d="M4 9h8v3H4z" fill="#ccc" stroke="#555" /><path d="M2 4l9-3v3" fill="none" stroke="#555" /></>],
  ["Pan", false, <path d="M4 15L1 9q0-2 2-1l1 1L3 4q1-2 2 0l1 3V2q1-2 2 0v5l1-5q2-1 2 1L10 8l2-4q2 0 1 2l-1 6-2 3z" fill="#fff" stroke="#555" />],
  ["Zoom", false, <><circle cx="5.500" cy="7" r="4" fill="#e3f0f0" stroke="#666" /><path d="M8 10l5 5" stroke="#444" strokeWidth="2.200" /><path d="M11 4h5M13.500 1.500v5M11 8h5" stroke="#444" /></>],
  ["Fit", true, <><path d="M1 15V1h14v14z" fill="none" stroke="#777" strokeDasharray="2 2" /><circle cx="7.500" cy="7" r="5" fill="#e3f0f0" stroke="#666" /><path d="M11 11l4 4" stroke="#333" strokeWidth="2.400" /></>],
  ["Display Settings", true, <><path d="M1 2h14v10H1z" fill="#ddd" stroke="#555" /><path d="M3 4h10v6H3z" fill="#8fb1dd" stroke="#4d6a92" /><path d="M5 14h6" stroke="#666" strokeWidth="2" /></>],
  ["Grid and Snaps", true, <><path d="M1 1h14v14H1z" fill="#fff" stroke="#777" /><path d="M4 1v14M6.500 1v14M9 1v14M12 1v14M1 4h14M1 6.500h14M1 9h14M1 12h14" stroke="#8a8a8a" /></>],
  ["Viewports", true, <><path d="M1 2h14v12H1z" fill="#f0f0f0" /><path d="M1.500 2.500h6v5h-6zM9 2.500h6v5H9zM1.500 9h6v5h-6zM9 9h6v5H9z" fill="#9fbce4" stroke="#4d5f7d" /></>],
];

const play: [string, string][] = [
  ["Go to start", "M1 1h2v12H1zM12 1v12L4 7z"],
  ["Step back", "M9 1v12L0 7zM11 4h2v6h-2z"],
  ["Play", "M2 0l11 7-11 7z"],
  ["Step forward", "M5 1v12l9-6zM1 4h2v6H1z"],
  ["Go to end", "M11 1h2v12h-2zM2 1v12l8-6z"],
];

const apps: [string, boolean, boolean, React.ReactNode][] = [
  ["Firefox", false, false, <><circle cx="12" cy="13" r="10" fill="#ff5a2b" /><path d="M4 6Q2 20 12 22 23 21 22 9q-2-5-7-7 3 4 2 6-4-3-8 0z" fill="#ffb52e" /><circle cx="12" cy="13" r="5" fill="#7b3be0" /><path d="M3 8q4-1 7 3l-3 4q4 4 9 1-3 7-9 5-5-4-4-13z" fill="#ff3d52" /></>],
  ["Edge", true, false, <><circle cx="12" cy="12" r="11" fill="#1287d3" /><path d="M2 8Q7 0 14 1q9 3 9 11-1 4-6 4-4-1-2-4 0-6-6-6-4 0-7 2z" fill="#3fd08c" /><path d="M1 12q1-6 8-6 5 0 6 5-6-1-6 5 1 5 8 6-9 3-14-3z" fill="#0c5aa6" /><path d="M15 12q-1 4 3 4h4q-3 4-8 3-5-3-3-7z" fill="#2c3130" /></>],
  ["File Explorer", true, false, <><path d="M2 3h8l2 3h10v16H2z" fill="#f2b632" /><path d="M2 8h20v13H2z" fill="#ffd764" /><path d="M6 21v-7h12v7h-3v-3H9v3z" fill="#3b92de" /></>],
  ["Cura", true, false, <><path d="M5 1h17v18l-4 4H2V5z" fill="#1b5ae8" stroke="#fff" strokeWidth="1.400" /><path d="M16 8h-4q-3 0-3 4t3 4h4" fill="none" stroke="#fff" strokeWidth="2.200" /></>],
  ["Mail", false, false, <><path d="M1 9L12 1l11 8v13H1z" fill="#1667b8" /><path d="M3 9h18l-9 8z" fill="#fff" /><path d="M1 9l11 8 11-8v13H1z" fill="#30b4f0" /><path d="M1 22l11-8 11 8z" fill="#1e97e2" /></>],
  ["Fusion 360 Launcher", false, false, null],
  ["Microsoft 365", false, false, <><path d="M12 1L3 6v11l4 3V9l8-4z" fill="#6c6ff0" /><path d="M11 1q10 1 11 8v6l-5-2V9l-7-5z" fill="#4fb4ee" /><path d="M3 15l6 3 8-4 5-1v4l-9 6q-7-1-10-6z" fill="#b070e6" /></>],
  ["Arduino IDE", true, false, <><path d="M0 0h24v24H0z" fill="#0878d8" /><circle cx="12" cy="12" r="6.500" fill="#0b989c" /><circle cx="10" cy="12" r="1.800" fill="none" stroke="#fff" /><circle cx="14" cy="12" r="1.800" fill="none" stroke="#fff" /></>],
  ["Fusion 360", true, true, null],
  ["Settings", true, false, <g transform="translate(12 12)">{[0, 45, 90, 135].map((a) => <path key={a} d="M0-9.500V-6M0 9.500V6" stroke="#fff" strokeWidth="3.400" transform={`rotate(${a})`} />)}<circle r="6" fill="none" stroke="#fff" strokeWidth="2.400" /></g>],
];

const tray: [string, React.ReactNode][] = [
  ["Show hidden icons", <path d="M2 11l6-6 6 6" />],
  ["Safely Remove Hardware", <path d="M5 1h5v4H5zM3 5h9v11H3zM11 13l2 2 3-4" />],
  ["Windows Security", <><path d="M8 0l7 2v6q-1 6-7 8-6-2-7-8V2z" fill="#fff" /><path d="M8 1v14M1 8h14" stroke="#222" /><circle cx="11.500" cy="12" r="4" fill="#16a34a" stroke="none" /><path d="M9.500 12l1.500 1.500 2.500-3" /></>],
  ["Meet Now", <path d="M4 5h6v7H4zM10 8l3-2v5l-3-2M4 3q4-3 8 0M4 14q4 3 8 0" />],
  ["Sync", <><path d="M4 3H1v10h7M4 3l10-2v8M6 9q1-4 5-3M11 3v3H8" /><circle cx="12" cy="12.500" r="3.500" fill="#2f80d8" stroke="none" /></>],
  ["Network", <path d="M5 4h10v8H5zM7 15h7M10 12v3M1 2h4v4H1zM3 6v6h2" />],
  ["Volume", <path d="M1 6h2l4-4v12l-4-4H1zM9 6q1 2 0 4M11 4q3 4 0 8M13 2q4 6 0 12" />],
];

const SearchArt = () => (
  <svg width="74" height="36" viewBox="0 0 74 36">
    <path d="M0 32h74v4H0z" fill="#a8683f" />
    <path d="M7 3h17v7H7z" fill="#a57a68" /><path d="M6 1h18v3H6z" fill="#8a5f50" />
    <path d="M3 11h22v8H3zM3 22h24v10H3z" fill="#f1cf62" /><path d="M2 10h24v3H2zM1 20h26v4H1z" fill="#e3ba4c" />
    <path d="M28 5h14v27H28z" fill="#b08875" /><path d="M28 5h14v1H28zM28 14h14v1H28zM28 23h14v1H28z" fill="#7f5849" />
    <path d="M12 6h6M11 16h6M12 27h6M33 10h4M33 19h4M33 27h4" stroke="#63442c" strokeWidth="1.500" />
    <circle cx="51" cy="11" r="5" fill="#8ba3dd" /><path d="M57 5l8-2v3l4 1v3h-4l3 6H58l2-7z" fill="#3f9d6c" />
    <path d="M44 14h28v4h-2l-2 14H48l-2-14h-2z" fill="#c0c9e2" />
    <path d="M46 19h24M47 23h22M48 27h20M50 18l1 13M55 18v13M60 18v13M65 18l-1 13" stroke="#6877a5" />
  </svg>
);

export default function App() {
  return (
    <Shell>
      <Global />
      <TitleBar>
        <FusionLogo w={14} h={16} />
        <WindowTitle>Autodesk Fusion 360 (Personal - Not for Commercial Use)</WindowTitle>
        <WindowButton aria-label="Minimize"><svg width="10" height="10"><path d="M0 5.500h10" stroke="#000" /></svg></WindowButton>
        <WindowButton aria-label="Restore"><svg width="11" height="11" fill="none" stroke="#000"><path d="M.5 3.500h7v7h-7zM3.500 3V.5h7v7H8" /></svg></WindowButton>
        <WindowButton aria-label="Close"><Cross s={11} w={1} /></WindowButton>
      </TitleBar>

      <TabBar>
        <QuickAccess>
          <QuickButton aria-label="Data panel"><svg width="14" height="14" fill="currentColor"><path d="M0 0h4v4H0zM5 0h4v4H5zM10 0h4v4h-4zM0 5h4v4H0zM5 5h4v4H5zM10 5h4v4h-4zM0 10h4v4H0zM5 10h4v4H5zM10 10h4v4h-4z" /></svg></QuickButton>
          <QuickButton aria-label="File"><svg width="13" height="14" fill="currentColor"><path d="M0 0h7v5h6v9H0zM8 0l5 4H8z" /></svg><Caret /></QuickButton>
          <QuickButton aria-label="Save" $dim><svg width="14" height="14" viewBox="0 0 14 14"><path d="M0 0h12l2 2v12H0z" fill="currentColor" /><path d="M3 1h7v4H3zM3 8h8v6H3z" fill="#cbcbcb" /><path d="M7 1h2v3H7zM4 10h6M4 12h6" fill="currentColor" stroke="currentColor" /></svg></QuickButton>
          <QuickButton aria-label="Undo"><svg width="13" height="13" fill="none" stroke="currentColor" strokeWidth="2"><path d="M5 1L1 5l4 4M1 5h5q6 1 6 8" /></svg><Caret /></QuickButton>
          <QuickButton aria-label="Redo" $dim><svg width="13" height="13" fill="none" stroke="currentColor" strokeWidth="2"><path d="M8 1l4 4-4 4M12 5H7q-6 1-6 8" /></svg><Caret /></QuickButton>
        </QuickAccess>
        <HomeTab aria-label="Home"><svg width="14" height="13" viewBox="0 0 14 13" fill="currentColor"><path d="M0 7l7-7 3 3V1h2v4l2 2-1 1-1-.7V13H8.500V9h-3v4H2V7.300L1 8z" /></svg></HomeTab>
        <DocTabs>
          <DocTab $active><DocTitle><OrangeCube />wago 2 mod 2 v2</DocTitle><DocClose aria-label="Close tab"><Cross /></DocClose></DocTab>
          <DocTab>
            <DocTitle><svg width="12" height="13" viewBox="0 0 12 13"><path d="M3 6V4q0-3 3-3t3 3v2" fill="none" stroke="#777" strokeWidth="1.600" /><path d="M0 5h12v8H0z" fill="#777" /><path d="M2 7.500h8M2 9.500h8" stroke="#b9b9b9" /></svg>wago_holders*</DocTitle>
            <DocClose aria-label="Close tab"><Cross /></DocClose>
          </DocTab>
        </DocTabs>
        <NewTab aria-label="New tab"><svg width="12" height="12"><path d="M6 0v12M0 6h12" stroke="currentColor" strokeWidth="3" /></svg></NewTab>
        <Account>
          <button aria-label="Extensions"><svg width="16" height="16" viewBox="0 0 16 16"><circle cx="8" cy="8" r="8" fill="#0696d7" /><path d="M6.500 6v7M3 9.500h7" stroke="#fff" strokeWidth="2" /><path d="M10 3v3M8.500 4.500h3M12 6v2" stroke="#fff" /></svg></button>
          <button aria-label="Job status"><svg width="16" height="16" viewBox="0 0 16 16"><circle cx="8" cy="8" r="7.300" fill="none" stroke="currentColor" /><circle cx="8" cy="8" r="5.800" fill="currentColor" /><path d="M8 4v4h3.500" stroke="#ddd" strokeWidth="1.500" fill="none" /></svg></button>
          <button aria-label="Notifications"><svg width="16" height="16" viewBox="0 0 16 16" fill="currentColor"><path d="M1 13l2-3V7q0-5 4-6 4 1 4 6v3l2 3zM5 14h4l-2 2z" /><circle cx="11.500" cy="4" r="3.300" fill="#0696d7" /></svg></button>
          <button aria-label="Help"><svg width="16" height="16" viewBox="0 0 16 16"><circle cx="8" cy="8" r="8" fill="currentColor" /><path d="M5.500 6q0-2.500 2.500-2.500T10.500 6Q10.500 7.500 8 8v2M8 11.300v2" stroke="#ddd" strokeWidth="1.700" fill="none" /></svg></button>
          <button aria-label="Profile"><svg width="22" height="22" viewBox="0 0 22 22"><defs><clipPath id="av"><circle cx="11" cy="11" r="11" /></clipPath></defs><g clipPath="url(#av)"><path d="M0 0h22v22H0z" fill="#8fa7cb" /><ellipse cx="11" cy="8" rx="6" ry="7.500" fill="#3f4f68" /><path d="M8 12h6v5l6 2v3H2v-3l6-2z" fill="#4a5c78" /></g></svg></button>
        </Account>
      </TabBar>

      <Ribbon>
        <Workspace>DESIGN<Caret /></Workspace>
        <RibbonBody>
          <RibbonTabs>
            {["SOLID", "SURFACE", "MESH", "SHEET METAL", "PLASTIC", "UTILITIES"].map((t, i) => <RibbonTab key={t} $on={i === 0}>{t}</RibbonTab>)}
          </RibbonTabs>
          <Groups>
            {groups.map((g) => (
              <Group key={g.label}>
                <ToolRow>{g.tools.map(([n, I]) => <Tool key={n} aria-label={n}><I /></Tool>)}</ToolRow>
                <GroupLabel>{g.label}<Caret /></GroupLabel>
              </Group>
            ))}
            <Group>
              <ToolRow><SelectTool aria-label="Select tool"><Lasso /></SelectTool></ToolRow>
              <GroupLabel>SELECT<Caret /></GroupLabel>
            </Group>
          </Groups>
        </RibbonBody>
      </Ribbon>

      <Viewport>
        <Model />
        <CubeSpot><ViewCube /></CubeSpot>
        <Panel>
          <PanelHead>
            <PanelIcon aria-label="Collapse browser"><svg width="10" height="6"><path d="M5 0v6L0 3zM10 0v6L5 3z" fill="#222" /></svg></PanelIcon>
            <PanelTitle>BROWSER</PanelTitle>
            <button aria-label="Minimize browser"><svg width="9" height="9"><circle cx="4.500" cy="4.500" r="4.500" fill="#222" /><path d="M2 4.500h5" stroke="#fff" strokeWidth="1.500" /></svg></button>
          </PanelHead>
          <Tree>
            <TreeRow $depth={0}>
              <Twisty aria-label="Collapse"><Opened /></Twisty>
              <Chip $root><Eye /><RootName><Cube />wago 2 mod 2 v2</RootName>
                <svg width="12" height="12"><circle cx="6" cy="6" r="5.300" fill="#fff" stroke="#333" /><circle cx="6" cy="6" r="2" fill="#222" /></svg>
              </Chip>
            </TreeRow>
            {nodes.map((n) => (
              <TreeRow key={n.name} $depth={n.depth}>
                {!n.leaf && <Twisty aria-label="Toggle">{n.open ? <Opened /> : <Closed />}</Twisty>}
                {n.leaf && <Twisty as="span" />}
                <Chip>{n.icons}<NodeName>{n.name}</NodeName></Chip>
              </TreeRow>
            ))}
          </Tree>
        </Panel>
        <BottomRow>
          <Panel>
            <PanelHead>
              <PanelIcon as="span" />
              <PanelTitle>COMMENTS</PanelTitle>
              <button aria-label="Expand comments"><svg width="9" height="9"><circle cx="4.500" cy="4.500" r="4.500" fill="#222" /><path d="M2 4.500h5M4.500 2v5" stroke="#fff" strokeWidth="1.500" /></svg></button>
            </PanelHead>
          </Panel>
          <NavBar>
            {navIcons.map(([n, menu, art]) => (
              <NavButton key={n} aria-label={n}><svg width="16" height="16" viewBox="0 0 16 16">{art}</svg>{menu && <Caret s={5} c="#333" />}</NavButton>
            ))}
          </NavBar>
        </BottomRow>
      </Viewport>

      <Timeline>
        <ScrollThumb />
        <Playback>
          {play.map(([n, d]) => <PlayButton key={n} aria-label={n}><svg width="14" height="14" viewBox="0 0 14 14"><path d={d} fill="currentColor" /></svg></PlayButton>)}
        </Playback>
        <Track>
          <Features>
            {features.map((f, i) => {
              const [name, Icon] = featureIcons[f];
              return <Feature key={i} aria-label={name} $sel={i === 25}><span><Icon w={16} h={16} /></span></Feature>;
            })}
          </Features>
          <Rail><RailDash /><RailLine /></Rail>
          <Marker><svg width="10" height="30"><path d="M0 0h10v5L6 9v21H4V9L0 5z" fill="#5c5c5c" /></svg></Marker>
        </Track>
        <TimelineSettings aria-label="Timeline settings"><GearShape s={14} c="#7d7d7d" /></TimelineSettings>
      </Timeline>

      <Taskbar>
        <Start aria-label="Start"><svg width="16" height="16" fill="#fff"><path d="M0 2l7-1v7H0zM8 1l8-1v8H8zM0 9h7v6l-7-1zM8 9h8v7l-8-1z" /></svg></Start>
        <Search>
          <svg width="16" height="16" fill="none" stroke="#222" strokeWidth="1.300"><circle cx="10" cy="6" r="5" /><path d="M6 10l-5.500 5.500" /></svg>
          <SearchInput aria-label="Search" placeholder="Type here to search" />
          <SearchArt />
        </Search>
        <Apps>
          {apps.map(([n, run, act, art]) => (
            <AppButton key={n} aria-label={n} $run={run} $active={act}>
              {art ? <svg width="22" height="22" viewBox="0 0 24 24">{art}</svg> : <FusionLogo w={21} h={23} />}
            </AppButton>
          ))}
        </Apps>
        <Tray>
          {tray.map(([n, art]) => <TrayButton key={n} aria-label={n}><svg width="16" height="17" viewBox="0 0 16 17" fill="none" stroke="#f2f2f2" strokeWidth="1.200">{art}</svg></TrayButton>)}
          <Clock>15:23<br />30/12/2023</Clock>
          <Notices aria-label="Notifications">
            <svg width="24" height="24" viewBox="0 0 24 24"><path d="M1 1h15v11H8l-4 4v-4H1z" fill="#fff" /><path d="M3 4h11M3 6.500h11M3 9h8" stroke="#333" /><circle cx="15.500" cy="15.500" r="7.500" fill="#333" stroke="#999" /><text x="15.500" y="19.500" fill="#fff" fontSize="11" textAnchor="middle" fontFamily="Roboto, sans-serif">3</text></svg>
          </Notices>
          <DesktopEdge />
        </Tray>
      </Taskbar>
    </Shell>
  );
}
